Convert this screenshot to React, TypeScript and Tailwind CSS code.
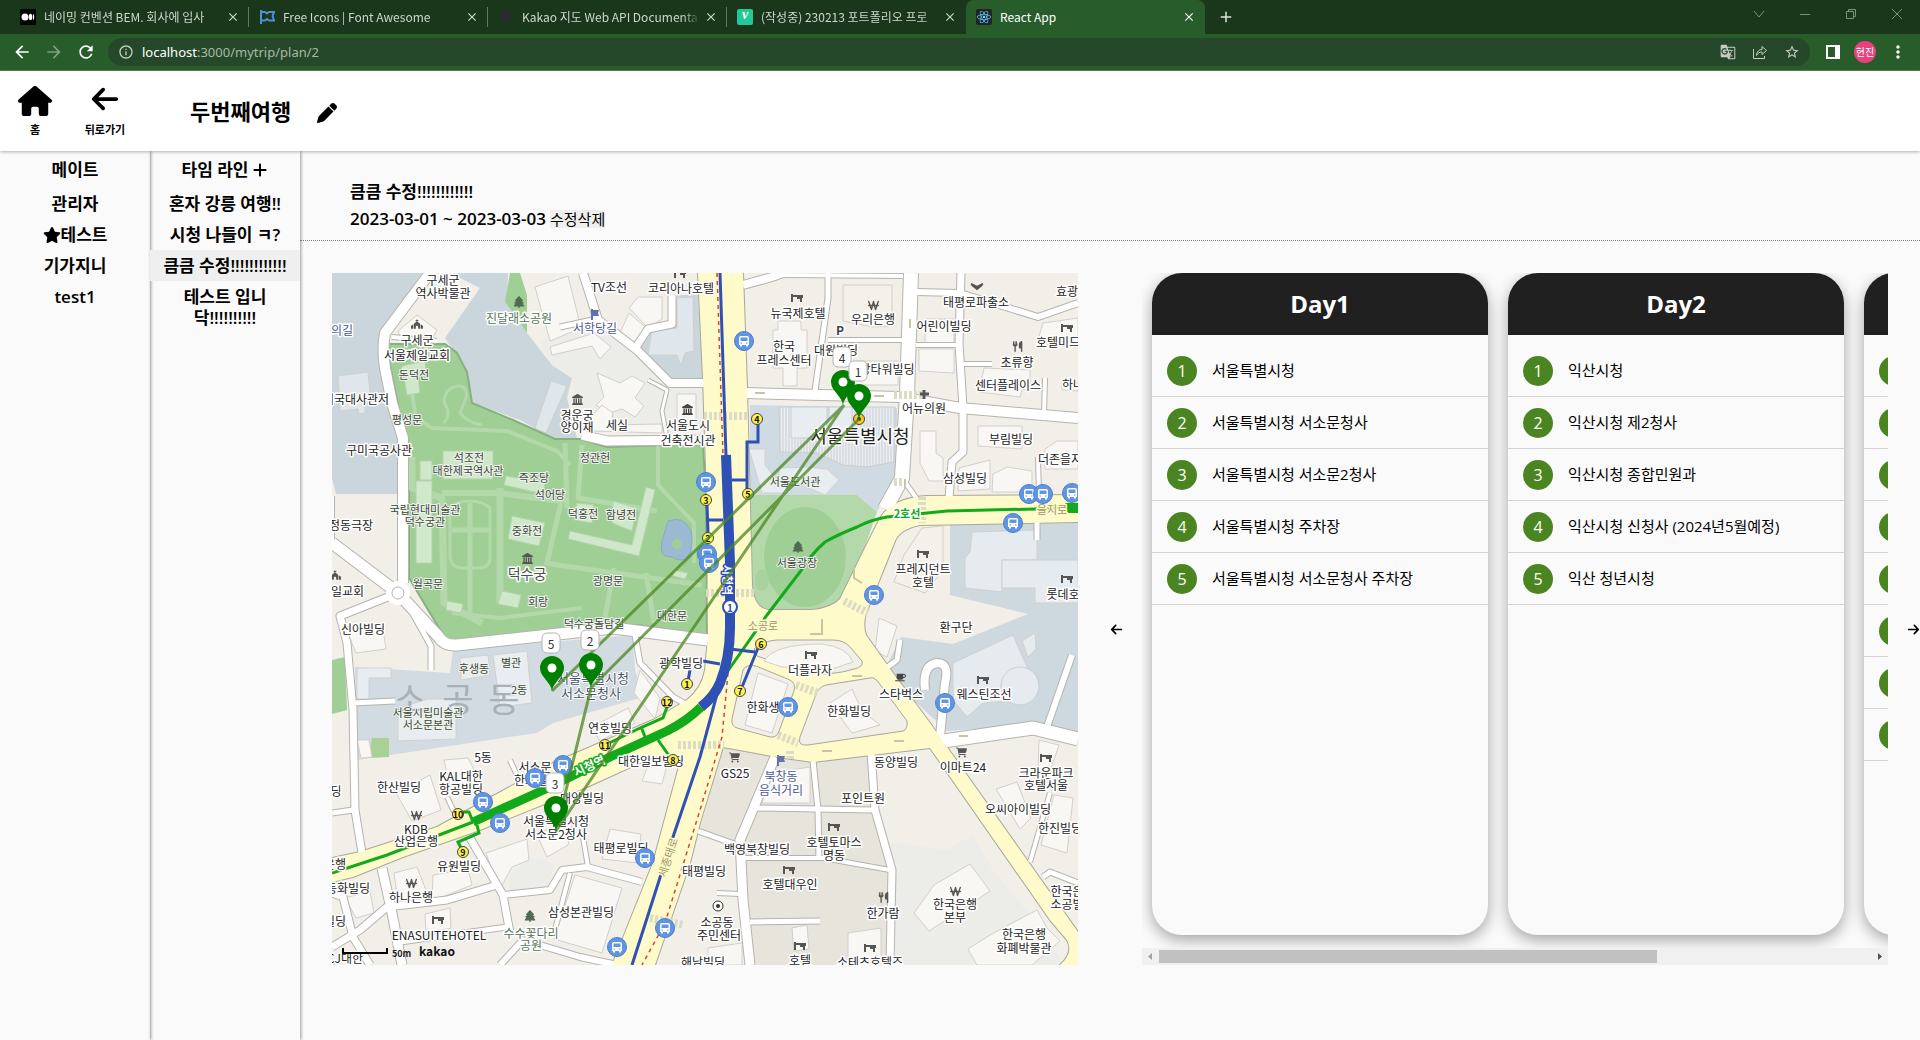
import { useState } from "react";
import { FaArrowLeft, FaArrowRight, FaHouse, FaPen, FaPlus, FaStar, FaTree, FaWonSign, FaChurch, FaUtensils, FaCartShopping, FaMugSaucer, FaLandmark } from "react-icons/fa6";
import { MdGTranslate, MdStarOutline, MdArrowBack, MdArrowForward, MdRefresh, MdInfoOutline, MdMoreVert, MdClose, MdAdd } from "react-icons/md";
import { FaReact } from "react-icons/fa";

const tabs = [
    { title: '네이밍 컨벤션 BEM. 회사에 입사', icon: 'medium' },
    { title: 'Free Icons | Font Awesome', icon: 'fa' },
    { title: 'Kakao 지도 Web API Documenta', icon: 'kakao' },
    { title: '(작성중) 230213 포트폴리오 프로', icon: 'velog' },
    { title: 'React App', icon: 'react' },
];

const mates = [
    { name: '관리자', leader: false },
    { name: '테스트', leader: true },
    { name: '기가지니', leader: false },
    { name: 'test1', leader: false },
];

const timelines = ['혼자 강릉 여행!!', '시청 나들이 ㅋ?', '큼큼 수정!!!!!!!!!!!!', '테스트 입니닥!!!!!!!!!!'];

const days = [
    { title: 'Day1', places: ['서울특별시청', '서울특별시청 서소문청사', '서울특별시청 서소문2청사', '서울특별시청 주차장', '서울특별시청 서소문청사 주차장'] },
    { title: 'Day2', places: ['익산시청', '익산시청 제2청사', '익산시청 종합민원과', '익산시청 신청사 (2024년5월예정)', '익산 청년시청'] },
    { title: 'Day3', places: ['', '', '', '', '', '', '', ''] },
];

// [fill, path]
const areas: [string, string][] = [
    ['#cad6dc', 'M0 0H90L50 62L68 150L66 221H4L0 205Z'],
    ['#cad6dc', 'M118 0H176L175 29L195 60L220 92L240 105L235 125L245 165H221L188 147L141 130L131 92L113 65L148 15Z'],
    ['#9fcf95', 'M178 0H188L195 22V60L183 42L173 29Z'],
    ['#ecece8', 'M208 69L255 55L301 75L335 109L371 112V159H248L240 105L220 92Z'],
    ['#cad6dc', 'M345 22H366L371 105L338 107L305 79L318 55L343 52Z'],
    ['#d2dbe2', 'M121 377L301 362L303 397L311 424L221 450L205 460L25 487L23 394L118 400Z'],
    ['#9fcf95', 'M0 387L13 384L15 437L0 441Z'],
    ['#a9d096', 'M40 465H57V484L37 485Z'],
    ['#cfdae2', 'M418 132L565 135L568 179L561 209L545 239L525 222H418Z'],
    ['#cdd8df', 'M618 252L746 250V462L701 452L615 458L551 399L569 364L621 371L696 341L618 322Z'],
    ['#ecece8', 'M553 569L615 577L641 562L661 597L721 670L730 692H560Z'],
    ['#e7e4dc', 'M391 474L445 484L481 489L538 480L541 534L555 584L565 604L561 692H418L405 570L368 557Z'],
    ['#ecece8', 'M178 622L215 617L222 590L200 585L178 600Z'],
];

const buildings: [string, string][] = [
    ['#f8f7f3', 'M203 14L236 3L249 55L218 68Z'],
    ['#f8f7f3', 'M66 58L85 42L105 57L99 68H70Z'],
    ['#dfe6ec', 'M6 103L36 99L39 129L33 130V140L27 141L26 136L8 138Z'],
    ['#dfe6ec', 'M219 108L235 113L214 160L203 155Z'],
    ['#dfe6ec', 'M345 25L361 24L362 78L353 80L349 92L345 82H316L320 57L345 55Z'],
    ['#f8f7f3', 'M265 100L288 110L300 103L313 110L303 125L312 133L303 144L290 136L277 140L264 132L272 124Z'],
    ['#f8f7f3', 'M258 145L270 132L281 140L279 152L330 151V160L262 158Z'],
    ['#f8f7f3', 'M218 74L262 60L279 74L268 86L260 73L220 82Z'],
    ['#f8f7f3', 'M297 35L306 24H330V46L316 55Z'],
    ['#f8f7f3', 'M288 60L297 40L318 58L303 72Z'],
    ['#f8f7f3', 'M345 121H364V155H345Z'],
    ['#f8f7f3', 'M446 48H469V57H475V95H465V113H451V95H441V57H446Z'],
    ['#f4f1ea', 'M511 12H560V53L541 54L511 48Z'],
    ['#f8f7f3', 'M593 46H622V71H593Z'],
    ['#f8f7f3', 'M587 76H622V100L587 98Z'],
    ['#f8f7f3', 'M525 88H566V112H513V100Z'],
    ['#f8f7f3', 'M652 95L698 97V115L690 117L688 124L647 119Z'],
    ['#f8f7f3', 'M646 153H690V176L646 173Z'],
    ['#f8f7f3', 'M588 158H604V180L611 185V208H597L588 190Z'],
    ['#f8f7f3', 'M627 195L658 187V216L626 218Z'],
    ['#f8f7f3', 'M661 201L675 194L700 198V219H660Z'],
    ['#f8f7f3', 'M713 176L725 168H746V196H713Z'],
    ['#f8f7f3', 'M705 70L711 50L746 45V75Z'],
    ['#f8f7f3', 'M730 110H746V118L730 117Z'],
    ['#e8edf1', 'M417 176H433V192L440 201L460 220H430Z'],
    ['#e8edf1', 'M448 195L475 194L495 196L507 207L493 222L465 210L445 214Z'],
    ['#e6ebf0', 'M640 259L705 257V287H670V319L633 315V285L638 279Z'],
    ['#e6ebf0', 'M670 287H746V330H703V315H670Z'],
    ['#f4f1ea', 'M572 282L590 255L611 253V297L593 320L562 309Z'],
    ['#e6ebf0', 'M621 390L681 362L705 417L688 427L651 430L635 444L621 427Z'],
    ['#e6ebf0', 'M690 368L703 360L704 376L696 384Z'],
    ['#f8f7f3', 'M547 345L565 353L555 384L543 378Z'],
    ['#e8edf1', 'M25 395H59V405H37V426H25Z'],
    ['#e8edf1', 'M128 385L156 382L158 402L129 407Z'],
    ['#e8edf1', 'M161 382L195 378L200 430L168 434Z'],
    ['#e8edf1', 'M66 435L96 426H124V466L66 468Z'],
    ['#f8f7f3', 'M25 467H37L40 484L29 485Z'],
    ['#f8f7f3', 'M260 454L296 435L303 450L268 468Z'],
    ['#f8f7f3', 'M308 397L328 425L323 446L302 420Z'],
    ['#f8f7f3', 'M320 482L338 480L330 511L310 508Z'],
    ['#f8f7f3', 'M112 487L136 485L148 508L120 520Z'],
    ['#f8f7f3', 'M64 520L98 502L109 537L80 548Z'],
    ['#f8f7f3', 'M154 580L195 566L197 587L180 594L167 618Z'],
    ['#f8f7f3', 'M204 560L240 550L236 572L215 584Z'],
    ['#f8f7f3', 'M278 556L309 561L306 590L270 586Z'],
    ['#f8f7f3', 'M243 602L290 615L270 680L222 666Z'],
    ['#f8f7f3', 'M62 600L85 594L95 620L66 628Z'],
    ['#f8f7f3', 'M101 602L136 596L140 612L100 628Z'],
    ['#f8f7f3', 'M93 641L118 635L119 655L94 660Z'],
    ['#f8f7f3', 'M13 625L38 618L42 640L24 645Z'],
    ['#f8f7f3', 'M14 356L50 350L54 376L24 380Z'],
    ['#f8f7f3', 'M438 500L478 494V530H430Z'],
    ['#f8f7f3', 'M707 467L727 472L716 504L706 500Z'],
    ['#f8f7f3', 'M664 516L685 509L699 545L688 556Z'],
    ['#f8f7f3', 'M722 522L741 525L735 580L709 572Z'],
    ['#f8f7f3', 'M602 612L638 591L658 618L597 658L582 640Z'],
    ['#f8f7f3', 'M636 676L658 662L680 650L705 637L715 655L728 668L700 692H645Z'],
    ['#f8f7f3', 'M460 655L475 652L477 676L462 678Z'],
    ['#f8f7f3', 'M516 660L549 655V690H516Z'],
    ['#f8f7f3', 'M376 675L410 670V692H376Z'],
];

// [path, width]
const roads: [string, number][] = [
    ['M98 0L53 60Q50 75 53 95L60 130L71 165V310', 10],
    ['M0 270L66 320L106 363Q112 373 125 372L281 355L305 358L376 367', 11],
    ['M66 320L8 343L15 370L21 437L23 537L30 580', 7],
    ['M75 330L99 373V397', 5],
    ['M21 430L63 428', 5],
    ['M0 540L21 537', 5],
    ['M0 223V270', 4],
    ['M251 0L266 47L305 77L338 110H373', 8],
    ['M228 54L265 46', 5],
    ['M304 74L316 56L340 51V22', 7],
    ['M316 107L335 117L330 138L335 165', 3],
    ['M250 162L275 168L373 167', 9],
    ['M60 64L105 68', 4],
    ['M411 12L440 4L451 0', 8],
    ['M496 0V25L483 118', 5],
    ['M451 2L571 3', 4],
    ['M579 0L575 122L570 205L553 236', 14],
    ['M496 67H572', 4],
    ['M414 120L568 124L628 135L746 145', 10],
    ['M629 0L627 70L631 135V179L620 189L617 225', 7],
    ['M584 19L628 20L706 44L746 30', 6],
    ['M584 72H626', 4],
    ['M630 91H660', 4],
    ['M713 105L712 140', 4],
    ['M706 184L707 224', 4],
    ['M573 209L585 226', 4],
    ['M705 248V267', 5],
    ['M605 469L701 455L746 466', 13],
    ['M593 417Q590 392 605 390Q618 390 613 410L608 464', 8],
    ['M740 382L715 454', 6],
    ['M568 367L565 387L549 399', 5],
    ['M443 484L408 567L411 627L418 692', 9],
    ['M366 558L405 572', 5],
    ['M539 478L543 537L560 597L558 692', 7],
    ['M481 487L486 537L487 587', 5],
    ['M424 535L541 537', 5],
    ['M411 585H491L558 597', 4],
    ['M418 649L488 648', 5],
    ['M385 620L408 621', 4],
    ['M718 520L698 589', 4],
    ['M711 604L718 599L746 610', 5],
    ['M50 595L60 640L70 692', 9],
    ['M0 620L11 624L21 664L38 692', 7],
    ['M0 674L28 657L55 634L115 627L165 612', 7],
    ['M138 565L171 622L178 660', 7],
    ['M171 622L218 617L230 597L255 594L310 609', 6],
    ['M251 564L256 594', 4],
    ['M238 600L221 664', 4],
    ['M168 692L191 667L248 684L285 692', 6],
    ['M61 670L175 654', 5],
    ['M115 524L126 547', 4],
    ['M178 487L188 509', 4],
    ['M303 362L308 390L341 424L352 430', 5],
];

const yellowRoad = 'M366 0L411 0L415 115L420 312Q422 335 436 337H480Q500 335 508 326L531 279L548 245Q560 225 595 223L746 222V249L588 252Q568 256 563 268L535 338Q530 350 534 362L561 400L598 450L615 474L746 659V692H728Q742 680 735 667L718 647L598 475L481 489L445 484L391 474L368 550L358 590L323 692H280L321 590L350 482L321 484L255 514L148 557L71 584L21 604L0 609V585L28 579L105 554L221 490L321 447L355 427Q370 415 373 397L376 364L375 225L371 105Z';

const islands = [
    'M422 376Q430 368 445 367H501Q512 367 518 374L530 388Q532 394 522 396Q500 403 475 400L425 383Z',
    'M411 397Q414 391 424 393L458 407Q464 410 462 418L447 458Q445 465 438 464L405 455Q399 453 400 446Z',
    'M494 412L538 405Q543 404 547 410L575 448Q576 456 571 458L476 472Q465 473 468 464L483 424Q486 414 494 412Z',
];

const islandBuildings = [
    'M432 388Q442 371 490 371Q515 374 521 389L500 396L450 394Z',
    'M426 400L456 411L440 460L413 452Z',
    'M498 430L520 416L530 438L548 452L520 460Z',
];

const parkPaths: [string, number][] = [
    ['M80 120L84 145L100 155L175 158L225 178L238 192', 4],
    ['M112 150Q120 140 112 130Q112 116 125 113Q136 112 134 125L128 140Q136 150 150 152', 3],
    ['M80 184V215L110 225L112 330L150 350', 7],
    ['M110 220H165L230 228', 6],
    ['M168 215V330', 7],
    ['M120 340L168 345L250 335', 4],
    ['M138 230V340M120 257H157', 5],
    ['M118 235V285Q120 295 130 295H146Q158 295 158 285V235Q150 228 138 228Q124 228 118 235', 3],
    ['M230 225L215 290L225 292L370 312', 5],
    ['M326 172V212L362 250V290', 4],
    ['M233 170L235 235M250 172L246 225L325 238', 5],
    ['M282 295L272 350M314 300L322 350', 5],
];

const palaces = [
    'M111 178H161V206H111Z', 'M84 208H100V290H84Z', 'M88 188H100V207H88Z', 'M174 203L213 210L211 221L172 212Z', 'M245 230L262 232L260 250L242 247Z',
    'M180 243L213 250L207 273L176 266Z', 'M314 214L323 217L307 283L236 266L238 258L300 272Z', 'M281 228L305 235L300 258L280 250Z',
    'M170 318L189 322L186 335L166 331Z', 'M115 328L131 331L129 340L114 337Z', 'M70 93L93 88L94 100L86 103L88 120L75 122L72 105L68 103Z', 'M342 297L356 300L353 306L341 303Z',
];

const exits: [number, number, string][] = [
    [425, 146, '4'], [416, 221, '5'], [374, 227, '3'], [376, 265, '2'], [429, 371, '6'], [408, 418, '7'], [355, 411, '1'],
    [335, 429, '12'], [273, 472, '11'], [341, 487, '8'], [126, 541, '10'], [131, 579, '9'],
];

const busStops = [
    [412, 68], [374, 209], [375, 281], [377, 290], [697, 221], [711, 221], [740, 220], [681, 250], [542, 322], [456, 434],
    [613, 430], [231, 492], [203, 505], [151, 529], [168, 550], [313, 585], [333, 655], [285, 674],
];

const labels: [number, number, string][] = [
    [111, 6, '구세군'], [111, 19, '역사박물관'], [277, 13, 'TV조선'], [349, 14, '코리아나호텔'], [85, 66, '구세군'], [85, 81, '서울제일교회'],
    [24, 125, '미국대사관저'], [47, 176, '구미국공사관'], [19, 251, '정동극장'], [10, 317, '제일교회'], [245, 141, '경운궁'], [245, 153, '양이재'],
    [285, 151, '세실'], [356, 151, '서울도시'], [356, 166, '건축전시관'], [466, 39, '뉴국제호텔'], [541, 45, '우리은행'], [452, 72, '한국'],
    [452, 86, '프레스센터'], [504, 76, '대원빌딩'], [555, 95, '강타워빌딩'], [644, 28, '태평로파출소'], [735, 17, '효광'], [612, 52, '어린이빌딩'],
    [726, 68, '호텔미드'], [685, 88, '초류향'], [676, 111, '센터플레이스'], [741, 110, '하나'], [592, 134, '어뉴의원'], [679, 165, '부림빌딩'],
    [728, 185, '더존을지'], [633, 204, '삼성빌딩'], [591, 295, '프레지던트'], [591, 308, '호텔'], [731, 320, '롯데호'], [31, 355, '신아빌딩'],
    [349, 389, '광학빌딩'], [278, 454, '연호빌딩'], [151, 483, '5동'], [203, 493, '서소문'], [204, 506, '한화빌딩'], [129, 502, 'KAL대한'],
    [129, 515, '항공빌딩'], [67, 513, '한산빌딩'], [4, 517, '딩'], [84, 555, 'KDB'], [84, 567, '산업은행'], [3, 590, '은행'], [127, 592, '유원빌딩'],
    [319, 487, '대한일보빌딩'], [250, 524, '대양빌딩'], [224, 547, '서울특별시청'], [224, 560, '서소문2청사'], [289, 574, '태평로빌딩'], [372, 597, '태평빌딩'],
    [16, 614, '동화빌딩'], [79, 623, '하나은행'], [3, 647, '빌딩'], [107, 661, 'ENASUITEHOTEL'], [249, 638, '삼성본관빌딩'], [13, 684, 'CJ대한'],
    [371, 688, '해남빌딩'], [385, 648, '소공동'], [387, 661, '주민센터'], [624, 353, '환구단'], [478, 396, '더플라자'], [431, 433, '한화생'],
    [517, 437, '한화빌딩'], [569, 420, '스타벅스'], [652, 420, '웨스틴조선'], [403, 499, 'GS25'], [564, 488, '동양빌딩'], [631, 493, '이마트24'],
    [714, 499, '크라운파크'], [714, 511, '호텔서울'], [531, 524, '포인트원'], [686, 535, '오씨아이빌딩'], [728, 554, '한진빌딩'], [502, 568, '호텔토마스'],
    [502, 581, '명동'], [425, 575, '백영북창빌딩'], [458, 610, '호텔대우인'], [551, 639, '한가람'], [623, 630, '한국은행'], [623, 643, '본부'],
    [735, 617, '한국은'], [735, 630, '소공빌'], [692, 660, '한국은행'], [692, 674, '화폐박물관'], [468, 686, '호텔'], [538, 688, '소테츠호텔즈'],
];

const softLabels: [number, number, string][] = [
    [82, 101, '돈덕전'], [75, 146, '평성문'], [137, 184, '석조전'], [136, 197, '대한제국역사관'], [202, 204, '즉조당'], [218, 221, '석어당'],
    [251, 240, '덕홍전'], [289, 241, '함녕전'], [195, 257, '중화전'], [276, 307, '광명문'], [96, 310, '월곡문'], [206, 328, '회랑'],
    [93, 236, '국립현대미술관'], [93, 248, '덕수궁관'], [263, 184, '정관헌'], [340, 342, '대한문'], [463, 208, '서울도서관'], [465, 289, '서울광장'],
    [262, 350, '덕수궁돌담길'], [142, 395, '후생동'], [179, 389, '별관'], [187, 416, '2동'], [96, 439, '서울시립미술관'], [96, 451, '서소문본관'],
];

const hotels = [[465, 25], [735, 55], [591, 281], [735, 306], [479, 382], [651, 407], [714, 485], [502, 554], [457, 597], [468, 673], [538, 675], [106, 647], [348, 1]];
const banks = [[541, 32], [84, 542], [79, 610], [623, 618]];
const trees = [[187, 29], [466, 274], [198, 643]];
const flags = [[263, 41], [449, 487]];

const pins = [
    { no: 4, x: 511, y: 132 },
    { no: 1, x: 527, y: 146 },
    { no: 5, x: 220, y: 418 },
    { no: 2, x: 259, y: 415 },
    { no: 3, x: 224, y: 558 },
];

function KakaoMap() {
    return (
        <svg viewBox="0 0 746 692" preserveAspectRatio="xMidYMid slice" className="block w-full h-full bg-[#f2efe9] font-['Noto_Sans_CJK_KR',sans-serif]" role="img" aria-label="지도">
            <defs>
                <pattern id="hatch" width="3" height="6" patternUnits="userSpaceOnUse">
                    <path d="M1 0V6" stroke="#c9ced3" strokeWidth="1" />
                </pattern>
                <g id="bus">
                    <circle r="9.5" fill="#6094e4" stroke="#4a7fd0" />
                    <path d="M-5 -3Q-5 -5 -3 -5H3Q5 -5 5 -3V4H4V5.500H2V4H-2V5.500H-4V4H-5Z" fill="#fff" />
                    <path d="M-3.500 -3.500H3.500V0H-3.500Z" fill="#6094e4" />
                    <path d="M-3.500 2H-2M2 2H3.500" stroke="#6094e4" />
                </g>
                <path id="hotel" d="M-6 -4H-4V-3H6V0H5V4H3V1H0V-1H-4V4H-6Z" fill="#555" />
                <path id="flag" d="M-4 -5H-2V-4H4L3 -1L4 2H-2V6H-4Z" fill="#6470b4" />
            </defs>

            {areas.map(([fill, d]) => <path key={d} d={d} fill={fill} />)}
            {buildings.map(([fill, d]) => <path key={d} d={d} fill={fill} stroke="#d2d0cc" strokeWidth="1" />)}
            <circle cx="688" cy="413" r="19" fill="#e6ebf0" stroke="#c9ced6" />
            <path d="M447 134H563L562 189L535 194L511 192L485 180L448 179Z" fill="#ebeef1" />
            <path d="M447 134H563L562 189L535 194L511 192L485 180L448 179Z" fill="url(#hatch)" stroke="#c9ced3" />
            <path d="M459 134H495V165H459ZM497 134H520V165H497Z" fill="#e8edf1" stroke="#c9ced3" />

            {/* palace park */}
            <path d="M56 71H113L125 80L135 99L140 130L181 147L223 166H248L275 174L371 171L374 225L375 362L305 352L125 368Q115 368 110 360L77 305V180L68 142L58 92Z" fill="#9fcf95" stroke="#86b17f" strokeWidth="2" />
            {parkPaths.map(([d, w]) => <path key={d} d={d} fill="none" stroke="#b3d9ab" strokeWidth={w} strokeLinejoin="round" />)}
            {palaces.map((d) => <path key={d} d={d} fill="#d0e8ca" stroke="#b4d2ae" />)}
            <path d="M336 248Q352 242 359 258Q362 272 356 284Q350 290 340 284Q326 285 330 268Z" fill="#9bb9d3" stroke="#8aaac6" />
            <circle cx="345" cy="271" r="5" fill="#9fcf95" />

            {/* plaza */}
            <path d="M418 222H525L545 239L531 279L508 326Q500 337 480 337H436Q422 335 421 320Z" fill="#b3d9ab" />
            <ellipse cx="473" cy="284" rx="41" ry="50" fill="#9fcf95" />
            <ellipse cx="430" cy="307" rx="7" ry="11" fill="#a8d39f" />

            <g fill="none" strokeLinejoin="round">
                {roads.map(([d, w]) => <path key={d} d={d} stroke="#b5b3ae" strokeWidth={w + 2} />)}
                <path d={yellowRoad} stroke="#a9a69c" strokeWidth="2" />
                {roads.map(([d, w]) => <path key={d} d={d} stroke="#fff" strokeWidth={w} />)}
            </g>
            <circle cx="66" cy="320" r="12" fill="#fff" />
            <circle cx="66" cy="320" r="6" fill="#fff" stroke="#b5b3ae" />
            <path d={yellowRoad} fill="#fefac9" />
            {islands.map((d) => <path key={d} d={d} fill="#f2efe9" stroke="#a9a69c" />)}
            {islandBuildings.map((d) => <path key={d} d={d} fill="#f8f7f3" stroke="#d2d0cc" />)}

            {/* crosswalks */}
            <g fill="none" stroke="#dedbc4" strokeWidth="8" strokeDasharray="3 2">
                <path d="M372 143H416M374 320H424M590 224V250M346 472H392M318 645L352 652M464 412L486 420M446 462L466 470M458 478V486M562 122H590M562 209H572M512 328L536 340" />
            </g>
            <g fill="none" stroke="#c9c3a2" strokeWidth="2">
                <path d="M478 361H490V346M522 295V305L530 310M433 120H423M552 123H542M578 55V46M573 215V206M530 403H520M490 478H500M562 468H572M636 463H627" />
            </g>

            {/* subway lines */}
            <g fill="none">
                <path d="M385 0L391 182M396 400L390 464L368 537L333 650L310 692" stroke="#d9433c" strokeWidth="1.500" strokeDasharray="4 4" />
                <path d="M746 235L615 238L555 244Q538 247 525 254Q505 262 493 269Q480 280 468 299L435 342L393 402" stroke="#12a91a" strokeWidth="3" />
                <path d="M733 235H746M735 222H746" stroke="#12a91a" strokeWidth="10" />
                <path d="M388 0L394 182M388 410L368 484L341 564L300 692" stroke="#2f51b6" strokeWidth="3" />
                <path d="M394 182L398 290V355Q398 385 388 410Q382 424 369 434" stroke="#2f51b6" strokeWidth="10" />
                <path d="M369 434Q355 448 335 458L278 484L218 514L141 549" stroke="#12a91a" strokeWidth="9" />
                <path d="M141 549L55 582L0 600" stroke="#12a91a" strokeWidth="3" />
                <path d="M426 150V169H415V219M400 207H415M375 232L376 259M376 247H391M398 376L423 379M426 375L410 414M371 388L388 391M358 397L356 408" stroke="#2f51b6" strokeWidth="3" />
                <path d="M335 434L331 445L308 455L273 472M310 456L313 464M326 467L338 484M130 539H137L141 549M145 552L147 560L126 569L129 575" stroke="#12a91a" strokeWidth="3" />
            </g>
            <circle cx="398" cy="334" r="7" fill="#fff" stroke="#2f51b6" strokeWidth="2" />

            {hotels.map(([x, y]) => <use key={`${x}-${y}`} href="#hotel" x={x} y={y} />)}
            {flags.map(([x, y]) => <use key={`${x}-${y}`} href="#flag" x={x} y={y} />)}
            {banks.map(([x, y]) => <FaWonSign key={`${x}-${y}`} x={x - 5} y={y - 5} size={11} color="#555" />)}
            {trees.map(([x, y]) => <FaTree key={`${x}-${y}`} x={x - 6} y={y - 6} size={12} color="#4f6b53" />)}
            <FaChurch x={79} y={45} size={12} color="#555" />
            <FaChurch x={-3} y={296} size={12} color="#555" />
            <FaLandmark x={240} y={121} size={11} color="#555" />
            <FaLandmark x={190} y={280} size={11} color="#555" />
            <FaLandmark x={350} y={131} size={11} color="#444" />
            <FaUtensils x={680} y={68} size={11} color="#555" />
            <FaUtensils x={546} y={619} size={11} color="#555" />
            <FaCartShopping x={397} y={479} size={11} color="#555" />
            <FaCartShopping x={624} y={474} size={11} color="#555" />
            <FaMugSaucer x={563} y={399} size={11} color="#444" />
            <path d="M592 117V126M588 121H597" stroke="#555" strokeWidth="3" />
            <path d="M640 12L645 16L650 12M639 11L645 14L651 11" stroke="#555" strokeWidth="2" fill="none" />
            <circle cx="386" cy="633" r="5" fill="#fff" stroke="#333" />
            <circle cx="386" cy="633" r="2" fill="#333" />

            <g textAnchor="middle" dominantBaseline="central" fontSize="12" stroke="#fff" strokeWidth="3" strokeLinejoin="round" paintOrder="stroke">
                <g fill="#a7b1b7" stroke="none" fontSize="34">
                    <text x="78" y="424">소</text>
                    <text x="126" y="424">공</text>
                    <text x="172" y="424">동</text>
                </g>
                <g fill="#222">
                    {labels.map(([x, y, text]) => <text key={`${x}-${y}`} x={x} y={y}>{text}</text>)}
                </g>
                <g fill="#3f443f" fontSize="11" stroke="#edf5ea" strokeWidth="2">
                    {softLabels.map(([x, y, text]) => <text key={`${x}-${y}`} x={x} y={y}>{text}</text>)}
                </g>
                <g fill="#4b5a94">
                    <text x="263" y="54">서학당길</text>
                    <text x="10" y="56">의길</text>
                    <text x="449" y="502">북창동</text>
                    <text x="449" y="516">음식거리</text>
                </g>
                <g fill="#56735a">
                    <text x="187" y="44">진달래소공원</text>
                    <text x="199" y="659">수수꽃다리</text>
                    <text x="199" y="671">공원</text>
                </g>
                <g fill="#9b966f" stroke="#fefac9" fontSize="11">
                    <text x="431" y="352">소공로</text>
                    <text x="720" y="236">을지로</text>
                    <text transform="translate(335 584) rotate(-72)">세종대로</text>
                </g>
                <g fill="#46536b" fontSize="13" strokeWidth="2">
                    <text x="261" y="404">서울특별시청</text>
                    <text x="259" y="419">서소문청사</text>
                </g>
                <text x="195" y="300" fill="#4a4f4a" fontSize="14">덕수궁</text>
                <text x="528" y="162" fill="#222" fontSize="18">서울특별시청</text>
                <text x="508" y="56" fill="#444" fontWeight="bold">P</text>
                <text x="575" y="240" fill="#12a91a" fontSize="11" fontWeight="bold">2호선</text>
                <text transform="translate(396 307) rotate(90)" fill="#fff" stroke="#2f51b6" fontSize="11" fontWeight="bold">시청역</text>
                <text transform="translate(257 492) rotate(-25)" fill="#fff" stroke="#12a91a" fontWeight="bold">시청역</text>
            </g>
            <text x="398" y="334" textAnchor="middle" dominantBaseline="central" fontSize="10" fontWeight="bold" fill="#2f51b6">1</text>

            {exits.map(([x, y, no]) => (
                <g key={`${x}-${y}`}>
                    <circle cx={x} cy={y} r="5.500" fill="#fdf250" stroke="#444" />
                    <text x={x} y={y} textAnchor="middle" dominantBaseline="central" fontSize="9" fontWeight="bold" fill="#111">{no}</text>
                </g>
            ))}
            <circle cx="527" cy="146" r="5.500" fill="#fdc61c" stroke="#444" />
            <circle cx="527" cy="146" r="2" fill="#333" />
            {busStops.map(([x, y]) => <use key={`${x}-${y}`} href="#bus" x={x} y={y} />)}

            {/* day route */}
            <path d="M527 146L259 415L224 558L512 132L220 418" fill="none" stroke="#4b8521" strokeOpacity="0.75" strokeWidth="3" />
            {pins.map((pin) => (
                <g key={pin.no} transform={`translate(${pin.x} ${pin.y})`}>
                    <path d="M0 0C-1 -9 -12 -14 -12 -23A12 12 0 0 1 12 -23C12 -14 1 -9 0 0Z" fill="#008000" />
                    <circle cy="-23" r="4.500" fill="#fff" />
                    <rect x="-10" y="-58" width="18" height="20" rx="5" fill="#fff" stroke="#b5b5b5" />
                    <text x="-1" y="-48" textAnchor="middle" dominantBaseline="central" fontSize="12" fill="#333">{pin.no}</text>
                </g>
            ))}

            <path d="M11 675V680H55V675" fill="none" stroke="#000" strokeWidth="2" />
            <text x="60" y="684" fontSize="9" fontWeight="bold" fill="#222">50m</text>
            <text x="87" y="683" fontSize="12" fontWeight="bold" fill="#111">kakao</text>
        </svg>
    );
}

function TabIcon({ icon }: { icon: string }) {
    if (icon === 'medium') {
        return (
            <svg viewBox="0 0 16 16" className="size-4 shrink-0">
                <rect width="16" height="16" rx="1" fill="#000" />
                <circle cx="5" cy="8" r="3.500" fill="#fff" />
                <ellipse cx="10.500" cy="8" rx="1.700" ry="3.300" fill="#fff" />
                <ellipse cx="13.500" cy="8" rx="0.700" ry="3" fill="#fff" />
            </svg>
        );
    }
    if (icon === 'fa') {
        return (
            <svg viewBox="0 0 16 16" className="size-4 shrink-0" fill="none" stroke="#528dd7" strokeWidth="2">
                <path d="M2 1V15M2 3H6L8 4.500L10 3H15L13.500 7L15 11.500H10L8 10L6 11.500H2" />
            </svg>
        );
    }
    if (icon === 'kakao') {
        return (
            <svg viewBox="0 0 16 16" className="size-4 shrink-0">
                <path d="M8 1A5 5 0 0 1 13 6C13 9 9 12 8 16C7 12 3 9 3 6A5 5 0 0 1 8 1Z" fill="#2b2b33" />
                <circle cx="8" cy="6" r="2" fill="#1b371b" />
            </svg>
        );
    }
    if (icon === 'velog') {
        return <span className="size-4 shrink-0 rounded-xs bg-[#20c997] text-white text-sm leading-3 font-bold italic text-center font-['Liberation_Serif',serif]">v</span>;
    }
    return (
        <span className="size-4 shrink-0 rounded-xs bg-[#20232a] flex items-center justify-center">
            <FaReact size={14} color="#61dafb" />
        </span>
    );
}

function Browser() {
    return (
        <div className="shrink-0 font-['Noto_Sans_CJK_KR',sans-serif]">
            <div className="flex h-[34px] bg-[#1b371b] pl-[10px]">
                {tabs.map((tab, i) => (
                    <div
                        key={tab.title}
                        className={`flex items-center w-[239px] h-full pl-[10px] text-xs ${i === 4 ? 'bg-[#285d2b] text-white rounded-t-lg' : 'text-[#cdd6cd]'}`}
                    >
                        <TabIcon icon={tab.icon} />
                        <span className={`ml-2 flex-1 overflow-hidden whitespace-nowrap ${i === 4 ? '' : 'mask-r-from-90%'}`}>{tab.title}</span>
                        <button aria-label="탭 닫기" className="ml-1"><MdClose size={14} /></button>
                        <span className={`ml-2 w-px h-5 ${i < 3 ? 'bg-[#5c7a5c]' : ''}`}></span>
                    </div>
                ))}
                <button aria-label="새 탭" className="ml-3 text-[#dbe3db]"><MdAdd size={18} /></button>
                <div className="ml-auto flex w-[184px] h-7 items-center text-[#7c927c]">
                    <svg viewBox="0 0 184 28" className="w-full h-full" fill="none" stroke="currentColor">
                        <path d="M18 11L23 17L28 11M64 14.500H74M110.500 11.500H117.500V18.500H110.500ZM112.500 11V9.500H119.500V16.500H118M156 9L166 19M166 9L156 19" />
                    </svg>
                </div>
            </div>
            <div className="flex items-center h-[37px] bg-[#285d2b] border-b border-[#5c825e] px-3 text-white">
                <button aria-label="뒤로" className="mr-3"><MdArrowBack size={20} /></button>
                <button aria-label="앞으로" className="mr-3 text-[#7f9f80]"><MdArrowForward size={20} /></button>
                <button aria-label="새로고침" className="mr-3"><MdRefresh size={20} /></button>
                <div className="flex flex-1 items-center h-7 rounded-full bg-[#26482a] pl-[10px] pr-[10px] text-[#c3cdc3]">
                    <MdInfoOutline size={16} />
                    <p className="ml-2 flex-1 text-[13px] leading-5 text-[#a7b8a7] font-['Noto_Sans',sans-serif]"><span className="text-white">localhost</span>:3000/mytrip/plan/2</p>
                    <div className="flex gap-4">
                        <MdGTranslate size={16} />
                        <svg viewBox="0 0 16 16" className="size-4" fill="none" stroke="currentColor">
                            <path d="M1.500 5V14.500H12.500V12M4.500 11.500C5 7.500 7 5.500 10 5.500V2.500L14.500 6.500L10 10.500V8C7.500 8 6 9 4.500 11.500Z" />
                        </svg>
                        <MdStarOutline size={16} />
                    </div>
                </div>
                <svg viewBox="0 0 14 14" className="size-[14px] ml-4"><path d="M0 0H14V14H0ZM2 2V12H9V2Z" fill="#fff" fillRule="evenodd" /></svg>
                <span className="ml-[14px] size-[22px] rounded-full bg-[#ec407a] text-[10px] leading-[22px] text-center">현진</span>
                <button aria-label="메뉴" className="ml-3"><MdMoreVert size={20} /></button>
            </div>
        </div>
    );
}

function DayCard({ title, places }: { title: string; places: string[] }) {
    return (
        <section className="w-[336px] shrink-0 rounded-[30px] overflow-hidden bg-[#fafafa] shadow-[0_5px_15px_rgba(0,0,0,0.35)]">
            <h2 className="h-[62px] bg-[#202020] text-white text-2xl leading-[62px] font-bold text-center">{title}</h2>
            <ol className="pt-[10px]">
                {places.map((place, i) => (
                    <li key={i} className="flex items-center h-[52px] border-b border-[#d3d3d3] px-[15px]">
                        <span className="size-[30px] rounded-full bg-[#4b8521] text-white text-base leading-[30px] text-center">{i + 1}</span>
                        <span className="ml-[15px] text-[15px] text-black">{place}</span>
                    </li>
                ))}
            </ol>
        </section>
    );
}

export default function App() {
    const [selected, setSelected] = useState(2);

    return (
        <div className="flex flex-col h-screen bg-[#fafafa] text-black font-['Open_Sans','Noto_Sans_CJK_KR',sans-serif]">
            <Browser />

            <header className="relative flex items-center h-20 shrink-0 bg-white shadow-[0_1px_3px_rgba(0,0,0,0.3)]">
                <button className="flex flex-col items-center w-[70px] text-[11px] leading-4 font-semibold">
                    <FaHouse size={34} />
                    <span className="mt-1">홈</span>
                </button>
                <button className="flex flex-col items-center w-[70px] text-[11px] leading-4 font-semibold">
                    <FaArrowLeft size={30} />
                    <span className="mt-2">뒤로가기</span>
                </button>
                <h1 className="ml-[50px] text-[22px] font-semibold">두번째여행</h1>
                <button aria-label="제목 수정" className="ml-[26px] pt-1"><FaPen size={20} /></button>
            </header>

            <div className="flex flex-1 min-h-0">
                <aside className="w-[150px] shrink-0 text-center text-[17px] leading-[21px] font-semibold shadow-[1px_0_3px_rgba(0,0,0,0.4)]">
                    <h3 className="py-2">메이트</h3>
                    <ul>
                        {mates.map((mate) => (
                            <li key={mate.name} className="flex items-center justify-center py-[5px]">
                                {mate.leader && <FaStar size={18} />}
                                {mate.name}
                            </li>
                        ))}
                    </ul>
                </aside>

                <aside className="w-[150px] shrink-0 text-center text-[17px] leading-[21px] font-semibold shadow-[1px_0_3px_rgba(0,0,0,0.4)]">
                    <h3 className="flex items-center justify-center gap-1 py-2">
                        타임 라인
                        <button aria-label="타임라인 추가"><FaPlus size={16} /></button>
                    </h3>
                    <ul>
                        {timelines.map((name, i) => (
                            <li key={name}>
                                <button onClick={() => setSelected(i)} className={`w-full px-2 py-[5px] ${selected === i ? 'bg-[#efefef]' : ''}`}>{name}</button>
                            </li>
                        ))}
                    </ul>
                </aside>

                <main className="flex flex-col flex-1 min-w-0">
                    <div className="h-[90px] shrink-0 pl-[50px] pt-[27px] border-b border-dotted border-[#777]">
                        <h2 className="text-[17px] leading-7 font-semibold">큼큼 수정!!!!!!!!!!!!</h2>
                        <div className="flex items-center h-[26px]">
                            <p className="text-[17px] leading-[26px] font-semibold">2023-03-01 ~ 2023-03-03</p>
                            <div className="flex ml-1 text-[15px] leading-[18px]">
                                <button className="bg-[#efefef]">수정</button>
                                <button className="bg-[#efefef]">삭제</button>
                            </div>
                        </div>
                    </div>

                    <div className="flex flex-1 min-h-0 pl-8 pt-8 pb-[75px]">
                        <div className="flex-1 min-w-0">
                            <KakaoMap />
                        </div>
                        <button aria-label="이전" className="w-16 pl-8 pt-5"><FaArrowLeft size={13} /></button>

                        <div className="flex flex-col flex-1 min-w-0">
                            <div className="flex flex-1 min-h-0 gap-5 pl-[10px] pb-[13px] overflow-hidden">
                                {days.map((day) => <DayCard key={day.title} title={day.title} places={day.places} />)}
                            </div>
                            <div className="flex items-center h-[17px] bg-[#f0f0f0]">
                                <svg viewBox="0 0 17 17" className="size-[17px]"><path d="M10 5V12L6 8.500Z" fill="#a3a3a3" /></svg>
                                <div className="flex-1">
                                    <div className="w-[70%] h-[13px] bg-[#c1c1c1]"></div>
                                </div>
                                <svg viewBox="0 0 17 17" className="size-[17px]"><path d="M7 5V12L11 8.500Z" fill="#505050" /></svg>
                            </div>
                        </div>
                        <button aria-label="다음" className="flex justify-end items-center w-8 pt-5"><FaArrowRight size={13} /></button>
                    </div>
                </main>
            </div>
        </div>
    );
}
